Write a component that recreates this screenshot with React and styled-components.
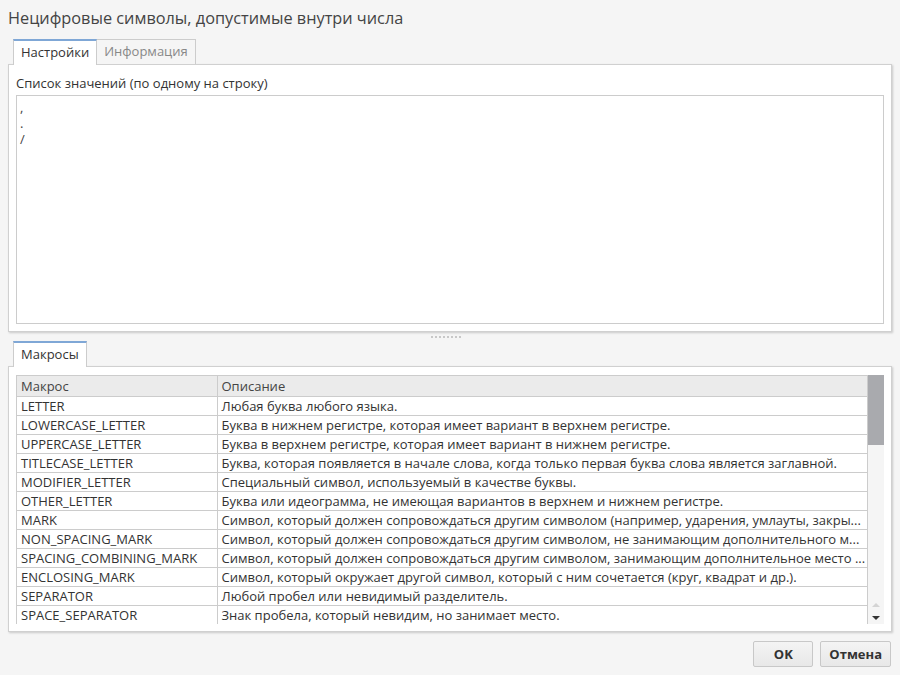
import React from 'react'
import styled, { createGlobalStyle } from 'styled-components'

const macros = [
    ['LETTER', 'Любая буква любого языка.'],
    ['LOWERCASE_LETTER', 'Буква в нижнем регистре, которая имеет вариант в верхнем регистре.'],
    ['UPPERCASE_LETTER', 'Буква в верхнем регистре, которая имеет вариант в нижнем регистре.'],
    ['TITLECASE_LETTER', 'Буква, которая появляется в начале слова, когда только первая буква слова является заглавной.'],
    ['MODIFIER_LETTER', 'Специальный символ, используемый в качестве буквы.'],
    ['OTHER_LETTER', 'Буква или идеограмма, не имеющая вариантов в верхнем и нижнем регистре.'],
    ['MARK', 'Символ, который должен сопровождаться другим символом (например, ударения, умлауты, закры...'],
    ['NON_SPACING_MARK', 'Символ, который должен сопровождаться другим символом, не занимающим дополнительного м...'],
    ['SPACING_COMBINING_MARK', 'Символ, который должен сопровождаться другим символом, занимающим дополнительное место ...'],
    ['ENCLOSING_MARK', 'Символ, который окружает другой символ, который с ним сочетается (круг, квадрат и др.).'],
    ['SEPARATOR', 'Любой пробел или невидимый разделитель.'],
    ['SPACE_SEPARATOR', 'Знак пробела, который невидим, но занимает место.'],
]

const GlobalStyle = createGlobalStyle`
    body{
        margin: 0;
        background: #f5f5f5;
        font-family: "Open Sans", "Noto Sans", sans-serif;
        color: #333;
    }
`

const App = () => {
    return (
        <>
            <GlobalStyle />
            <Dialog>
                <Title>Нецифровые символы, допустимые внутри числа</Title>
                <TabBar>
                    <Tab active>Настройки</Tab>
                    <Tab>Информация</Tab>
                </TabBar>
                <Panel height={268}>
                    <FieldLabel>Список значений (по одному на строку)</FieldLabel>
                    <ValuesArea readOnly defaultValue={',\n.\n/'} />
                </Panel>
                <Splitter>
                    <Grip />
                </Splitter>
                <TabBar>
                    <Tab active>Макросы</Tab>
                </TabBar>
                <Panel height={266}>
                    <GridBox>
                        <TableWrap>
                            <Table>
                                <colgroup>
                                    <col style={{ width: 200 }} />
                                    <col />
                                </colgroup>
                                <thead>
                                    <tr>
                                        <Th>Макрос</Th>
                                        <Th>Описание</Th>
                                    </tr>
                                </thead>
                                <tbody>
                                    {macros.map(([name, desc]) => (
                                        <tr key={name}>
                                            <Td>{name}</Td>
                                            <Td>{desc}</Td>
                                        </tr>
                                    ))}
                                </tbody>
                            </Table>
                        </TableWrap>
                        <ScrollBar>
                            <Thumb />
                            <Arrows>
                                <Arrow up />
                                <Arrow />
                            </Arrows>
                        </ScrollBar>
                    </GridBox>
                </Panel>
                <Footer>
                    <Button>OK</Button>
                    <Button>Отмена</Button>
                </Footer>
            </Dialog>
        </>
    )
}

export default App

const Dialog = styled.div`
    width: 900px;
    height: 675px;
    display: flex;
    flex-direction: column;
    padding: 0 8px;
    box-sizing: border-box;
`

const Title = styled.div`
    height: 39px;
    line-height: 37px;
    font-size: 16.3px;
    color: #444;
    white-space: nowrap;
`

const TabBar = styled.div`
    display: flex;
    padding-left: 5px;
    height: 25px;
    position: relative;
    z-index: 1;
`

const Tab = styled.div`
    box-sizing: border-box;
    height: ${p => (p.active ? '26px' : '25px')};
    padding: 0 7px;
    font-size: 13px;
    color: ${p => (p.active ? '#333' : '#888')};
    background: ${p => (p.active ? '#fff' : '#f5f5f5')};
    border: 1px solid #ccc;
    border-top: ${p => (p.active ? '2px solid #7fa7d6' : '1px solid #ccc')};
    border-bottom: none;
    border-left: ${p => (p.active ? '1px solid #ccc' : 'none')};
    line-height: ${p => (p.active ? '22px' : '23px')};
`

const Panel = styled.div`
    box-sizing: border-box;
    height: ${p => p.height}px;
    width: 884px;
    background: #fff;
    border: 1px solid #d0d0d0;
    box-shadow: 1px 1px 2px rgba(0, 0, 0, 0.18);
    padding: 8px 7px 7px 7px;
    display: flex;
    flex-direction: column;
`

const FieldLabel = styled.div`
    font-size: 13px;
    line-height: 18px;
    margin: 1px 0 3px 0;
`

const ValuesArea = styled.textarea`
    flex: 1;
    resize: none;
    outline: none;
    border: 1px solid #ccc;
    padding: 3px 3px;
    margin: 0;
    font-family: "Open Sans", "Noto Sans", sans-serif;
    font-size: 13px;
    line-height: 16px;
    color: #444;
`

const Splitter = styled.div`
    height: 9px;
    display: flex;
    justify-content: center;
    align-items: center;
`

const Grip = styled.div`
    width: 30px;
    height: 2px;
    margin-right: 8px;
    background: repeating-linear-gradient(90deg, #c8c8c8 0 2px, transparent 2px 4px);
`

const GridBox = styled.div`
    flex: 1;
    display: flex;
    overflow: hidden;
`

const TableWrap = styled.div`
    flex: 1;
    overflow: hidden;
    border-top: 1px solid #ccc;
    border-left: 1px solid #ccc;
    border-right: 1px solid #ccc;
`

const Table = styled.table`
    width: 100%;
    table-layout: fixed;
    border-collapse: collapse;
    font-size: 13px;
`

const Th = styled.th`
    height: 20px;
    padding: 0 4px;
    text-align: left;
    font-weight: normal;
    background: #ebebeb;
    color: #444;
    border-bottom: 1px solid #ccc;
    border-right: 1px solid #ccc;
    white-space: nowrap;
    &:last-child{
        border-right: none;
    }
`

const Td = styled.td`
    height: 18px;
    padding: 0 4px;
    line-height: 18px;
    border-bottom: 1px solid #ccc;
    border-right: 1px solid #ccc;
    white-space: nowrap;
    overflow: hidden;
    color: #333;
    &:last-child{
        border-right: none;
    }
`

const ScrollBar = styled.div`
    width: 16px;
    background: #f5f5f5;
    display: flex;
    flex-direction: column;
`

const Thumb = styled.div`
    height: 70px;
    background: #a9aaae;
`

const Arrows = styled.div`
    margin-top: auto;
    display: flex;
    flex-direction: column;
    align-items: center;
    gap: 9px;
    padding-bottom: 4px;
`

const Arrow = styled.div`
    width: 0;
    height: 0;
    border-left: 4px solid transparent;
    border-right: 4px solid transparent;
    border-bottom: ${p => (p.up ? '4px solid #d4d4d4' : 'none')};
    border-top: ${p => (p.up ? 'none' : '4px solid #333')};
`

const Footer = styled.div`
    flex: 1;
    display: flex;
    justify-content: flex-end;
    align-items: flex-start;
    gap: 7px;
    padding-top: 9px;
    margin-right: 1px;
`

const Button = styled.button`
    height: 26px;
    min-width: 60px;
    padding: 0 8px;
    border: 1px solid #c8c8c8;
    border-radius: 2px;
    background: linear-gradient(#f4f4f4, #e8e8e8);
    font-family: "Open Sans", "Noto Sans", sans-serif;
    font-weight: bold;
    font-size: 13px;
    color: #333;
`
